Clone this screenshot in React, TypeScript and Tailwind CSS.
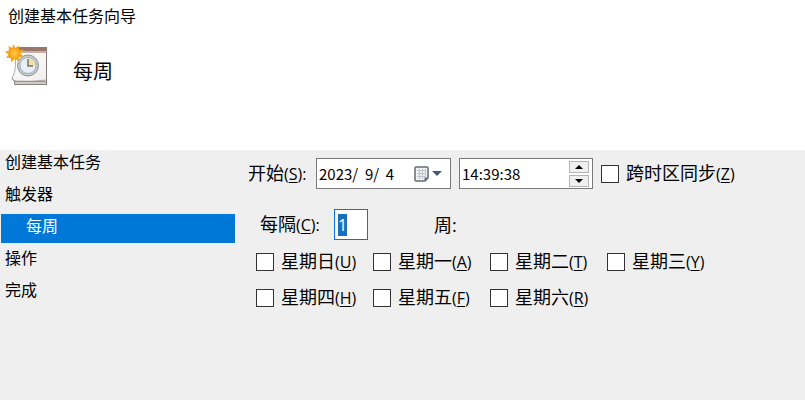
import React, { useEffect, useRef, useState } from 'react';
import clsx from 'clsx';

interface Option {
  label: string;
  accessKey: string;
}

const STEPS = [
  { label: '创建基本任务' },
  { label: '触发器' },
  { label: '每周', nested: true },
  { label: '操作' },
  { label: '完成' },
];

const DAYS: Option[] = [
  { label: '星期日', accessKey: 'U' },
  { label: '星期一', accessKey: 'A' },
  { label: '星期二', accessKey: 'T' },
  { label: '星期三', accessKey: 'Y' },
  { label: '星期四', accessKey: 'H' },
  { label: '星期五', accessKey: 'F' },
  { label: '星期六', accessKey: 'R' },
];

function TaskIcon() {
  return (
    <svg width="44" height="44" viewBox="0 0 44 44" aria-hidden="true">
      <defs>
        <linearGradient id="page" x1="0" y1="0" x2="1" y2="1">
          <stop offset="0" stopColor="#ffffff" />
          <stop offset="1" stopColor="#f1eeee" />
        </linearGradient>
        <radialGradient id="sun">
          <stop offset="0" stopColor="#ffcf3a" />
          <stop offset="1" stopColor="#f7a01a" />
        </radialGradient>
      </defs>
      <path d="M9.5 34 V40.5 H41.5 V36 Z" fill="#cfcaca" stroke="#8b8584" />
      <path d="M10.5 4 H41.5 V36 Q26 38 11 37 Q8 37 7 34 Q10 30 10.5 20 Z" fill="url(#page)" stroke="#b5aeac" />
      <path d="M7 34 Q8 37.5 11 37.5 H40" fill="none" stroke="#9a9493" />
      <path d="M12 3 H42 V7 H12 Z" fill="#9b776b" />
      <path d="M12 7 H42 V9 H12 Z" fill="#c9b0a7" />
      <path d="M41.5 8 V41" stroke="#827a78" />
      <circle cx="23" cy="21.5" r="10.5" fill="#c6cacc" stroke="#8d9497" />
      <circle cx="23" cy="21.5" r="8" fill="#e6f0f6" stroke="#a3aeb5" />
      <path d="M23 21.5 V14.5 A7 7 0 0 1 30 21.5 Z" fill="#f6dfa0" />
      <path d="M23 15 V22 H28" fill="none" stroke="#6d7478" strokeWidth="1.5" />
      <path
        d="M8.5 0.5 L10.5 4 L14 1.5 L14 6 L18.5 5.5 L15.5 9.5 L18.5 12.5 L14 13 L13.5 17.5 L10 14.5 L6.5 18.5 L5.5 14 L1 14 L3.5 10.5 L0 7.5 L4 6.5 L3.5 2 L7 4 Z"
        fill="#f5a31b"
      />
      <circle cx="9.5" cy="9.5" r="5.5" fill="url(#sun)" />
    </svg>
  );
}

function CalendarIcon() {
  return (
    <svg width="28" height="16" viewBox="0 0 28 16" aria-hidden="true">
      <path d="M2 1 H13 Q14 1 14 2 V12 L11 15 H2 Q1 15 1 14 V2 Q1 1 2 1 Z" fill="#f2f2f5" stroke="#676a73" strokeWidth="1.5" />
      <path d="M3 4.5 H12 M3 7.5 H12 M3 10.5 H12 M5.5 3 V13 M8.5 3 V13 M11.5 3 V11" stroke="#c0c3cc" />
      <path d="M14 11.5 H10.5 V15 Z" fill="#676a73" />
      <path d="M18 5 H28 L23 10 Z" fill="#44597a" />
    </svg>
  );
}

function LabelText({ label, accessKey, suffix = '' }: Option & { suffix?: string }) {
  return (
    <>
      {label}
      <span className="text-base leading-6">
        (<span className="underline underline-offset-2">{accessKey}</span>){suffix}
      </span>
    </>
  );
}

function CheckOption({ label, accessKey }: Option) {
  return (
    <label className="flex items-center gap-[7px] whitespace-nowrap">
      <input
        type="checkbox"
        className="size-[18px] shrink-0 appearance-none border border-[#333333] bg-white checked:bg-[#0078d7]"
      />
      <span>
        <LabelText label={label} accessKey={accessKey} />
      </span>
    </label>
  );
}

export default function App() {
  const [date, setDate] = useState('2023/  9/  4');
  const [time, setTime] = useState('14:39:38');
  const [interval, setInterval] = useState('1');
  const intervalRef = useRef<HTMLInputElement>(null);

  useEffect(() => {
    intervalRef.current?.focus();
    intervalRef.current?.select();
  }, []);

  return (
    <div className="flex min-h-screen flex-col bg-white font-['Open_Sans','Noto_Sans_CJK_SC',sans-serif] text-black">
      <header className="h-[150px] shrink-0">
        <h1 className="px-2 pt-1 text-base leading-6">创建基本任务向导</h1>
        <div className="flex items-center gap-6 px-[5px] pt-4">
          <TaskIcon />
          <h2 className="pt-3 text-xl">每周</h2>
        </div>
      </header>

      <div className="flex grow bg-[#efefef]">
        <nav className="w-[235px] shrink-0">
          <ul className="text-base leading-6">
            {STEPS.map((step) => (
              <li
                key={step.label}
                className={clsx(
                  'ml-px h-8',
                  step.nested ? 'text-white' : 'pl-1'
                )}
              >
                {step.nested ? (
                  <a href="#weekly" className="block h-[29px] bg-[#0078d7] pl-[25px]">
                    {step.label}
                  </a>
                ) : (
                  step.label
                )}
              </li>
            ))}
          </ul>
        </nav>

        <main className="grow pl-[13px] pt-2 text-lg leading-6">
          <div className="flex items-center">
            <label htmlFor="start-date" className="w-[68px] shrink-0 whitespace-nowrap">
              <LabelText label="开始" accessKey="S" suffix=":" />
            </label>
            <div className="flex h-[31px] w-[135px] items-center border border-[#7a7a7a] bg-white pr-2">
              <input
                id="start-date"
                value={date}
                onChange={(e) => setDate(e.target.value)}
                className="w-0 grow whitespace-pre pl-[2px] font-['Noto_Sans_CJK_SC',sans-serif] text-[15px] outline-none"
              />
              <button type="button" aria-label="选择日期">
                <CalendarIcon />
              </button>
            </div>
            <div className="ml-2 mr-2 flex h-[31px] w-[134px] items-center border border-[#7a7a7a] bg-white pr-[3px]">
              <input
                aria-label="时间"
                value={time}
                onChange={(e) => setTime(e.target.value)}
                className="w-0 grow pl-[2px] font-['Noto_Sans_CJK_SC',sans-serif] text-[15px] outline-none"
              />
              <div className="flex flex-col gap-[2px]">
                <button
                  type="button"
                  aria-label="增加"
                  className="flex h-3 w-5 items-center justify-center border border-[#b4b4b4] bg-[#efefef]"
                >
                  <svg width="8" height="4" viewBox="0 0 8 4">
                    <path d="M0 4 L4 0 L8 4 Z" fill="#000000" />
                  </svg>
                </button>
                <button
                  type="button"
                  aria-label="减少"
                  className="flex h-3 w-5 items-center justify-center border border-[#b4b4b4] bg-[#efefef]"
                >
                  <svg width="8" height="4" viewBox="0 0 8 4">
                    <path d="M0 0 L4 4 L8 0 Z" fill="#000000" />
                  </svg>
                </button>
              </div>
            </div>
            <CheckOption label="跨时区同步" accessKey="Z" />
          </div>

          <div className="mt-5 flex items-center pl-3">
            <label htmlFor="interval" className="w-[74px] shrink-0 whitespace-nowrap">
              <LabelText label="每隔" accessKey="C" suffix=":" />
            </label>
            <input
              id="interval"
              ref={intervalRef}
              value={interval}
              onChange={(e) => setInterval(e.target.value)}
              className="h-[31px] w-[34px] border border-[#0078d7] bg-white pl-[3px] text-base outline-none selection:bg-[#1a6fc0] selection:text-white"
            />
            <span className="ml-[66px]">周:</span>
          </div>

          <div className="mt-[9px] grid grid-cols-[repeat(4,117px)] gap-y-[11px] pl-2">
            {DAYS.map((day) => (
              <CheckOption key={day.accessKey} label={day.label} accessKey={day.accessKey} />
            ))}
          </div>
        </main>
      </div>
    </div>
  );
}
